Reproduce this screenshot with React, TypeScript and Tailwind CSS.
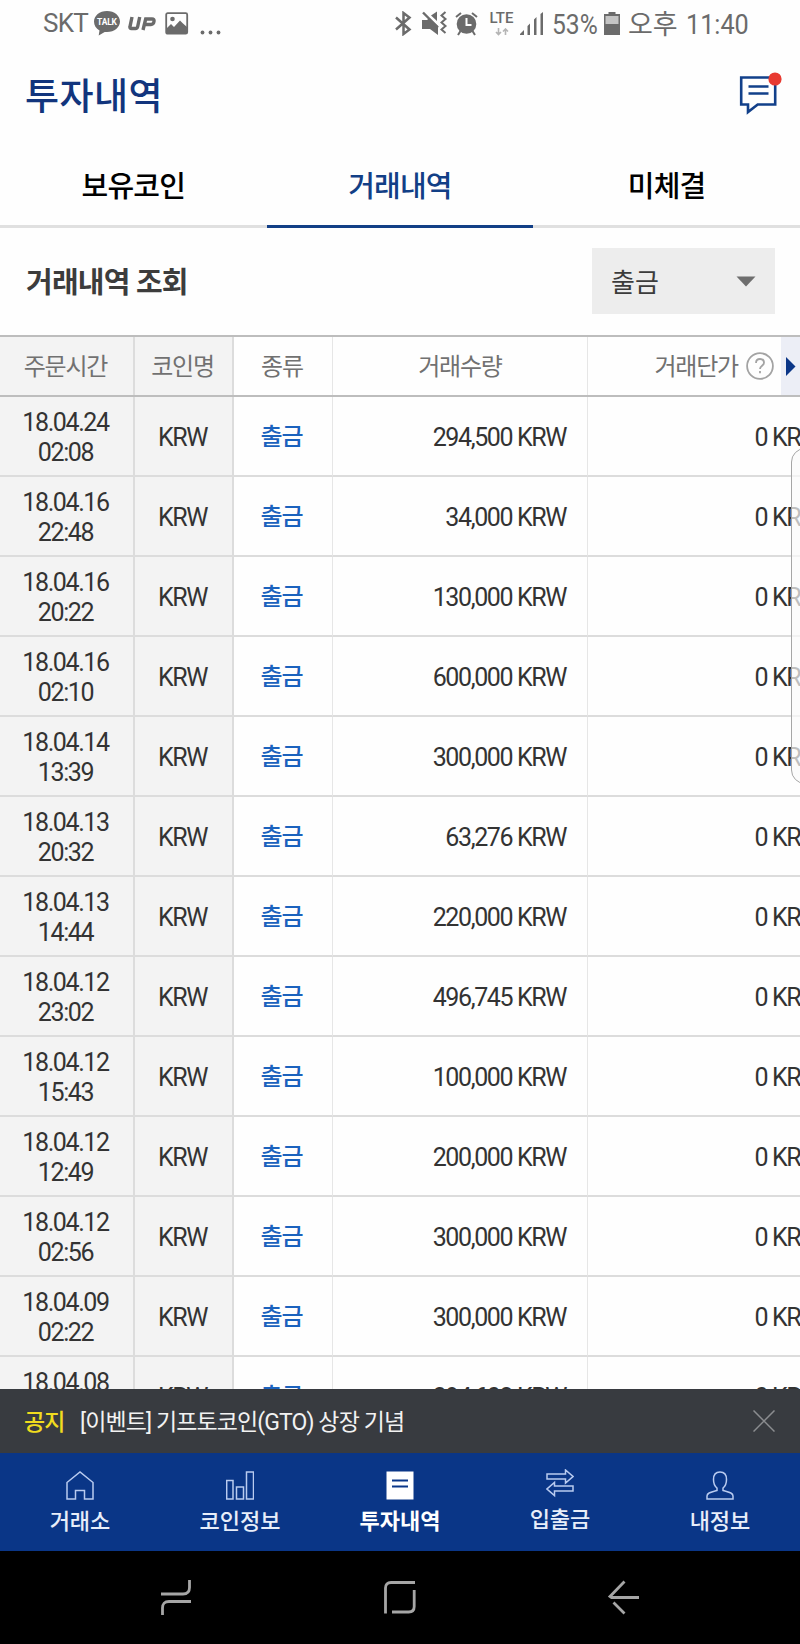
import { useState } from 'react';

type Trade = { date: string; time: string; amount: string };

const TABS = ['보유코인', '거래내역', '미체결'];

const TRADES: Trade[] = [
  { date: '18.04.24', time: '02:08', amount: '294,500' },
  { date: '18.04.16', time: '22:48', amount: '34,000' },
  { date: '18.04.16', time: '20:22', amount: '130,000' },
  { date: '18.04.16', time: '02:10', amount: '600,000' },
  { date: '18.04.14', time: '13:39', amount: '300,000' },
  { date: '18.04.13', time: '20:32', amount: '63,276' },
  { date: '18.04.13', time: '14:44', amount: '220,000' },
  { date: '18.04.12', time: '23:02', amount: '496,745' },
  { date: '18.04.12', time: '15:43', amount: '100,000' },
  { date: '18.04.12', time: '12:49', amount: '200,000' },
  { date: '18.04.12', time: '02:56', amount: '300,000' },
  { date: '18.04.09', time: '02:22', amount: '300,000' },
  { date: '18.04.08', time: '', amount: '394,602' },
];

function StatusBar() {
  return (
    <div className="flex h-[48px] shrink-0 items-start pl-[43px] text-[#6b6b6b]">
      <span className="mt-[8px] w-[50px] text-[26px] leading-[30px] tracking-[-0.7px]">SKT</span>
      <svg className="mt-[11px]" width="28" height="25" viewBox="0 0 28 25" fill="none">
        <path d="M14 0C6.500 0 1 4.700 1 10.500c0 4 2 7 5.500 9L5.700 24.500l6-3.500H14c7.500 0 13-4.700 13-10.500S21.500 0 14 0Z" fill="#6b6b6b" />
        <text x="14" y="13.500" textAnchor="middle" fontSize="8.500" fontWeight="700" fill="#fff" textLength="20">TALK</text>
      </svg>
      <svg className="mt-[16px] ml-[6px]" width="30" height="15" viewBox="0 0 30 15" fill="none" stroke="#6b6b6b" strokeWidth="3.400">
        <path d="M5 1 3 10.500q-.5 2 1.500 2h4q1.800 0 2.200-2L12.700 1M16 14l2.700-11H25q2.500 0 2 2.500-.6 3-3 3h-6" />
      </svg>
      <svg className="mt-[12px] ml-[8px]" width="24" height="23" viewBox="0 0 24 23" fill="none">
        <rect x="1.200" y="1.200" width="21" height="20.500" rx="1.500" stroke="#6b6b6b" strokeWidth="1.800" />
        <circle cx="7.500" cy="7" r="2.300" fill="#6b6b6b" />
        <path d="m2 16 4-4 3 3 6-6.500 3 3 4 3.500v6H2Z" fill="#6b6b6b" />
      </svg>
      <svg className="mt-[30px] ml-[11px]" width="22" height="5" viewBox="0 0 22 5" fill="#6b6b6b">
        <circle cx="2.500" cy="2.500" r="1.900" />
        <circle cx="10.500" cy="2.500" r="1.900" />
        <circle cx="18.500" cy="2.500" r="1.900" />
      </svg>

      {/* Bluetooth */}
      <svg className="mt-[11px] ml-[173px]" width="18" height="25" viewBox="0 0 18 25" fill="none" stroke="#6b6b6b" strokeWidth="2.500">
        <path d="m1 6.500 13.500 12L8.500 23V2l6 4.500L1 18.500" />
      </svg>
      {/* Vibrate */}
      <svg className="mt-[11px] ml-[8px]" width="27" height="25" viewBox="0 0 27 25" fill="#6b6b6b">
        <path d="M1 9h5l2.500-2L17 15v9l-8-6H1ZM10 4.500l6-4V10Z" />
        <path d="m2 1.500 15 15" stroke="#6b6b6b" strokeWidth="2.400" />
        <path d="m24.500 1-4 3.500 4 3.500-4 3.500 4 3.500-4 3.500 4 3.500" fill="none" stroke="#6b6b6b" strokeWidth="2" />
      </svg>
      {/* Alarm */}
      <svg className="mt-[12px] ml-[7px]" width="24" height="24" viewBox="0 0 24 24" fill="none">
        <circle cx="11.500" cy="12" r="9.800" fill="#6b6b6b" />
        <path d="m1 5 5-4M22 5l-5-4M5.500 19 3 23M17.500 19l2.500 4" stroke="#6b6b6b" strokeWidth="2" />
        <path d="M11.500 6v7h5" stroke="#fff" strokeWidth="2" />
      </svg>
      {/* LTE */}
      <div className="mt-[12px] ml-[9px] flex w-[27px] flex-col items-center">
        <span className="text-[15px] leading-[13px] font-medium">LTE</span>
        <svg className="mt-[3px]" width="14" height="8" viewBox="0 0 14 8" fill="none" stroke="#b5b5b5" strokeWidth="1.600">
          <path d="M3.500 0v6M1 4l2.500 2.500L6 4M10.500 7V1M8 3.500 10.500 1 13 3.500" />
        </svg>
      </div>
      <svg className="mt-[12px] ml-[5px]" width="24" height="23" viewBox="0 0 24 23" fill="#6b6b6b">
        <path d="M0 23v-1l4-4v5ZM7.500 23v-9l2.500-2.500V23ZM14 23V7.500L16.500 5v18ZM20.500 23V2L23 0v23Z" />
      </svg>
      <span className="mt-[9px] ml-[8px] w-[53px] origin-left scale-x-[0.88] text-[28px] leading-[32px]">53%</span>
      <svg className="mt-[12px] -ml-px" width="16" height="23" viewBox="0 0 16 23">
        <path d="M4.500 0h7v2H16v21H0V2h4.500Z" fill="#6b6b6b" />
        <path d="M1.500 4h13v8h-13Z" fill="#c4c4c4" />
      </svg>
      <span className="mt-[9px] ml-[8px] w-[58px] text-[27px] leading-[32px]">오후</span>
      <span className="mt-[9px] origin-left scale-x-[0.9] text-[28px] leading-[32px]">11:40</span>
    </div>
  );
}

function Header() {
  return (
    <div className="flex h-[90px] shrink-0 items-start justify-between pr-[18px] pl-[25px]">
      <h1 className="mt-[23px] text-[37px] leading-[54px] font-medium tracking-[0.5px] text-[#12357d]">투자내역</h1>
      <svg className="mt-[24px]" width="43" height="44" viewBox="0 0 43 44" fill="none" stroke="#12408a" strokeWidth="2.600">
        <path d="M2.200 5.500h34v27H18.700l-9.700 7.500v-7.500H2.200Z" />
        <path d="M9.500 14.500h20M9.500 21.500h20" />
        <circle cx="36" cy="7" r="6.600" fill="#e83a31" stroke="none" />
      </svg>
    </div>
  );
}

function HeadCells() {
  return (
    <div className="grid h-[62px] shrink-0 grid-cols-[135px_99px_99px_255px_212px] border-y-2 border-[#bdbdbd] text-[24px] leading-[36px] tracking-[-1.2px] text-[#717171]">
      <div className="flex items-center justify-center border-r-2 border-[#dcdcdc] bg-[#f3f3f3] pt-[2px] pr-[2px]">주문시간</div>
      <div className="flex items-center justify-center border-r-2 border-[#dcdcdc] bg-[#f3f3f3] pt-[2px] pr-[2px]">코인명</div>
      <div className="flex items-center justify-center border-r border-[#e6e6e6] pt-[2px] pr-[2px]">종류</div>
      <div className="flex items-center justify-center border-r border-[#e6e6e6] pt-[2px]">거래수량</div>
      <div className="flex items-center justify-end">
        <span className="pt-[2px]">거래단가</span>
        <svg className="ml-[8px]" width="28" height="28" viewBox="0 0 28 28" fill="none" stroke="#a3a3a3" strokeWidth="1.800">
          <circle cx="14" cy="14" r="12.900" />
          <path d="M10 11q0-4 4-4t4 3.800c0 3-4 3-4 6.200M14 19v2.200" />
        </svg>
        <div className="ml-[7px] flex h-full w-[19px] items-center bg-[#eceef6] pl-[5px]">
          <svg width="10" height="19" viewBox="0 0 10 19" fill="#0b3687">
            <path d="m0 0 9.500 9.500L0 19Z" />
          </svg>
        </div>
      </div>
    </div>
  );
}

function TradeRow({ trade }: { trade: Trade }) {
  return (
    <div className="grid h-[80px] shrink-0 grid-cols-[135px_99px_99px_255px_256px] text-[25px] leading-[29.500px] tracking-[-1.4px] text-[#333]">
      <div className="flex flex-col items-center border-r-2 border-b-2 border-[#dcdcdc] bg-[#f3f3f3] pt-[11px] pr-[2px]">
        <span>{trade.date}</span>
        <span>{trade.time}</span>
      </div>
      <div className="flex items-center justify-center border-r-2 border-b-2 border-[#dcdcdc] bg-[#f3f3f3] pt-[4px] pr-[2px]">KRW</div>
      <div className="flex items-center justify-center border-r border-b-2 border-[#dcdcdc] border-r-[#e6e6e6] pt-[4px] pr-[3px] text-[24px] font-medium tracking-[-1.2px] text-[#1b62bd]">출금</div>
      <div className="flex items-center justify-end border-r border-b-2 border-[#dcdcdc] border-r-[#e6e6e6] pt-[4px] pr-[21px]">{trade.amount} KRW</div>
      <div className="flex items-center justify-end border-b-2 border-[#dcdcdc] pt-[4px] pr-[23px]">0 KRW</div>
    </div>
  );
}

const NAV = [
  {
    label: '거래소',
    icon: <path d="M1 11.500 14 1l13 10.500V28h-8.500v-8.500h-9V28H1Z" />,
  },
  {
    label: '코인정보',
    icon: <path d="M.7 9.500H7V28H.7ZM10.500 16h7v12h-7ZM20.500 1H27.500v27h-7Z" />,
  },
  {
    label: '투자내역',
    icon: (
      <>
        <path d="M.5.500h27v28H.5Z" fill="#fff" stroke="none" />
        <path d="M6 9.500h16M6 15.500h16" stroke="#0a3789" strokeWidth="2" />
      </>
    ),
  },
  {
    label: '입출금',
    icon: <path d="M1 5h18.500V1L27 7.500 19.500 14v-4H1ZM27 17H8.500v-3.500L1 20l7.500 6.500V22H27Z" />,
  },
  {
    label: '내정보',
    icon: <path d="M14 1C9.500 1 7.500 4 7.500 8.500c0 4 1.500 7 3.500 8.500v2.500C6 21 1 21.500 1 25v3h26v-3c0-3.500-5-4-10-5.500V17c2-1.500 3.500-4.500 3.500-8.500C20.500 4 18.500 1 14 1Z" />,
  },
];

export default function App() {
  const [tab, setTab] = useState('거래내역');
  const [noticeOpen, setNoticeOpen] = useState(true);

  return (
    <div className="relative flex h-[1644px] w-[800px] flex-col overflow-hidden bg-[#fefefe] font-[Roboto,'Noto_Sans_CJK_KR',sans-serif]">
      <StatusBar />
      <Header />

      {/* Tabs */}
      <div className="grid h-[90px] shrink-0 grid-cols-3">
        {TABS.map(t => (
          <button
            key={t}
            onClick={() => setTab(t)}
            className={`border-b-[3px] pt-[10px] text-[29px] leading-[42px] font-medium tracking-[-0.8px] ${
              t === tab ? 'border-[#123f86] text-[#123f86]' : 'border-[#e0e0e0] text-black'
            }`}
          >
            {t}
          </button>
        ))}
      </div>

      {/* Filter */}
      <div className="flex h-[107px] shrink-0 items-center justify-between pr-[25px] pl-[26px]">
        <h2 className="pt-[2px] text-[29px] leading-[42px] font-bold tracking-[-0.8px] text-[#3c3c3c]">거래내역 조회</h2>
        <button className="-mt-px flex h-[66px] w-[183px] items-center justify-between bg-[#ededed] pr-[19px] pl-[19px] text-[26px] leading-[36px] text-[#3c3c3c]">
          <span className="pt-[3px]">출금</span>
          <svg width="20" height="11" viewBox="0 0 20 11" fill="#6e6e6e">
            <path d="M.5.500h19L10 10.500Z" />
          </svg>
        </button>
      </div>

      {/* Trades */}
      <HeadCells />
      <div className="flex min-h-0 flex-1 flex-col overflow-hidden">
        {TRADES.map(t => (
          <TradeRow key={t.date + t.time} trade={t} />
        ))}
      </div>

      {/* Edge panel handle */}
      <div className="absolute top-[448px] -right-[20px] h-[336px] w-[29px] rounded-[14px] border border-[#a5a5a5] bg-[#fafafa]/70" />

      {/* Notice */}
      {noticeOpen && (
        <div className="flex h-[64px] shrink-0 items-center bg-[#383b40] pr-[25px] pl-[24px] text-[23px] leading-[34px] tracking-[-0.9px] text-[#f2f2f2]">
          <span className="w-[56px] pt-[4px] font-medium text-[#f0dc1e]">공지</span>
          <span className="flex-1 pt-[4px]">[이벤트] 기프토코인(GTO) 상장 기념</span>
          <button onClick={() => setNoticeOpen(false)}>
            <svg width="22" height="22" viewBox="0 0 22 22" stroke="#8b8d90" strokeWidth="1.500">
              <path d="m.5.500 21 21M21.500.500l-21 21" />
            </svg>
          </button>
        </div>
      )}

      {/* Bottom navigation */}
      <nav className="grid h-[98px] shrink-0 grid-cols-5 bg-[#0a3687] text-[22px] leading-[32px] text-[#e8eefa]">
        {NAV.map(item => (
          <button
            key={item.label}
            className={`flex flex-col items-center ${item.label === '입출금' ? 'pt-[16px]' : 'pt-[18px]'} ${
              item.label === '투자내역' ? 'font-bold text-white' : 'font-medium'
            }`}
          >
            <svg width="28" height="29" viewBox="0 0 28 29" fill="none" stroke="#b9cbf0" strokeWidth="1.500">
              {item.icon}
            </svg>
            <span className="mt-[6px]">{item.label}</span>
          </button>
        ))}
      </nav>

      {/* System keys */}
      <div className="flex h-[93px] shrink-0 items-start bg-black pt-[29px] pl-[160px]">
        <svg width="32" height="35" viewBox="0 0 32 35" fill="none" stroke="#a6a6a6" strokeWidth="2.800">
          <path d="M1 14h22q6.500 0 6.500-6.500V0M31 21.500H9q-6.500 0-6.500 6.500v7" />
        </svg>
        <svg className="ml-[191px]" width="34" height="35" viewBox="0 0 34 35" fill="none" stroke="#a6a6a6" strokeWidth="2.800">
          <path d="M2.500 33.500V8q0-5.500 5.500-5.500h24M31.200 10v16.500q0 5.500-5.500 5.500H9" />
        </svg>
        <svg className="ml-[191px]" width="33" height="35" viewBox="0 0 33 35" fill="none" stroke="#a6a6a6" strokeWidth="2.800">
          <path d="M16.500 1.500 2 16.500l1.500 1H31M5.500 22.500 16.500 33.500" />
        </svg>
      </div>
    </div>
  );
}
